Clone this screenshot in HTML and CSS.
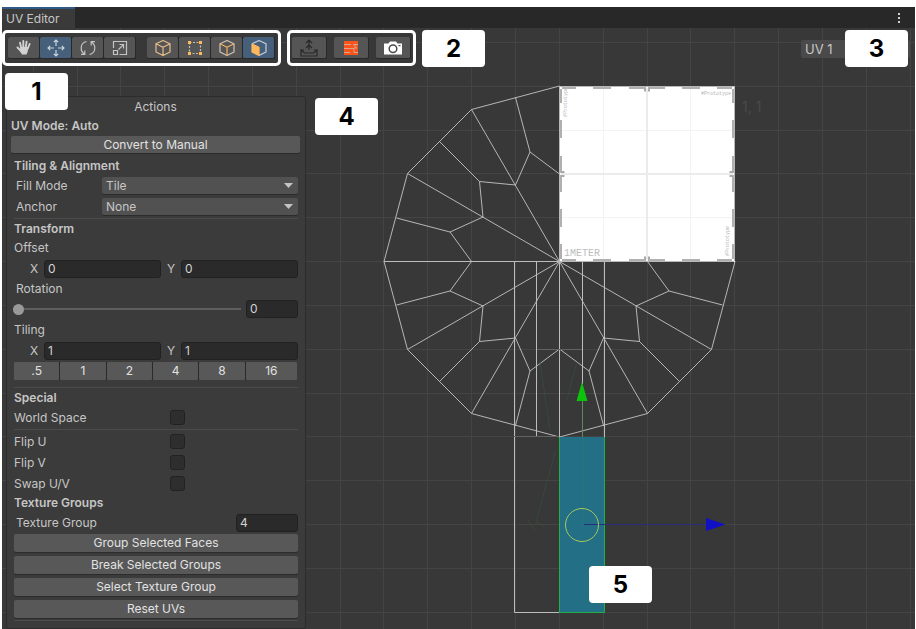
FILE: index.html
```html
<!DOCTYPE html>
<html lang="en">
<head>
<meta charset="utf-8">
<title>UV Editor</title>
<link rel="stylesheet" href="styles.css">
</head>
<body>
<div class="window">
  <header class="tabs">
    <div class="tab">UV Editor</div>
    <button class="menu" aria-label="Window menu"><svg width="4" height="12" viewBox="0 0 4 12"><path d="M1 1h2v2H1zM1 5h2v2H1zM1 9h2v2H1z" fill="#d0d0d0"/></svg></button>
  </header>
  <main class="viewport">
    <svg class="canvas" width="100%" height="100%" aria-hidden="true">
      <defs>
        <g id="quarter">
          <path d="M-175.500 0L-152-88L-88-152L0-175.500M0 0L-152-88M0 0L-88-152M-163-43.500L-109.500-29.500L-88 0M-109.500-29.500L-76.500-44.500L-80-80L-120-120M-80-80L-44-76.500L-29.500-109.500L-44-164M-29.500-109.500L0-87.500"/>
        </g>
        <g id="edge">
          <path d="M3 1.500h14M34 1.500h18M70 1.500h17M89 1.500h17M123 1.500h18M158 1.500h15" stroke="#b0b0b0" stroke-width="3"/>
          <path d="M85 4h2M89 4h2" stroke="#a9a9a9" stroke-width="3"/>
          <path d="M0 .5h175" stroke="#b9b9b9"/>
        </g>
      </defs>
      <g transform="translate(-2 -28)">
        <path d="M33.500 28V629M77.500 28V629M120.500 28V629M164.500 28V629M208.500 28V629M252.500 28V629M296.500 28V629M340.500 28V629M383.500 28V629M427.500 28V629M471.500 28V629M515.500 28V629M559.500 28V629M603.500 28V629M647.500 28V629M690.500 28V629M734.500 28V629M778.500 28V629M822.500 28V629M866.500 28V629M910.500 28V629" stroke="#444"/>
        <path d="M0 42.500H916M0 86.500H916M0 130.500H916M0 173.500H916M0 217.500H916M0 261.500H916M0 305.500H916M0 349.500H916M0 393.500H916M0 436.500H916M0 480.500H916M0 524.500H916M0 568.500H916M0 612.500H916" stroke="#444"/>
        <text x="742" y="112" class="coord">1, 1</text>
        <g fill="none" stroke="#c4c4c4" stroke-width=".9" transform="translate(559.500 261.500)">
          <use href="#quarter"/>
          <use href="#quarter" transform="scale(1 -1)"/>
          <use href="#quarter" transform="scale(-1 -1)"/>
        </g>
        <g fill="none" stroke="#bdbdbd">
          <path d="M384 261.500H735M536.500 261V437M559.500 261V437M582.500 261V384M604.500 261V437M514.500 261V612.500H559"/>
          <path d="M514 436.500H559M537 349.500H582" stroke="#626262"/>
        </g>
        <path d="M555 452L536 522L544 526M528 520L535 531M577 362L567 400M540 362L550 430" stroke="#35503c" stroke-width=".7" fill="none"/>
        <path d="M559 86H735V262H559z" fill="#fff"/>
        <path d="M603.500 88V260M690.500 88V260M561 130.500H733M561 217.500H733" stroke="#f3f3f3"/>
        <path d="M647 88V260M561 174H733" stroke="#ebebeb" stroke-width="2"/>
        <use href="#edge" transform="translate(559 86)"/>
        <use href="#edge" transform="translate(559 262) scale(1 -1)"/>
        <use href="#edge" transform="translate(559 86) rotate(90) scale(1 -1)"/>
        <use href="#edge" transform="translate(735 86) rotate(90)"/>
        <text x="564" y="256" class="meter">1METER</text>
        <text x="701" y="95" class="brand">#Prototype</text>
        <text class="brand" transform="translate(567 117) rotate(-90)">#Prototype</text>
        <text class="brand" transform="translate(729 256) rotate(-90)">#Prototype</text>
        <path d="M559 437H605V613H559z" fill="#226f86"/>
        <path d="M559.500 437V612.500H604.500V437" fill="none" stroke="#21b04a"/>
        <path d="M582.500 400V437" stroke="#5a8a5e"/>
        <path d="M582.500 437V524" stroke="#27777a"/>
        <path d="M582 382L587.500 401H576.500z" fill="#0dc40d"/>
        <path d="M584 524.500H706" stroke="#272f78"/>
        <path d="M706 518L725.500 524.500L706 531z" fill="#1010c4"/>
        <circle cx="582" cy="525" r="16.500" fill="none" stroke="#a9c75c"/>
      </g>
    </svg>

    <div class="topbar">
      <div class="tools">
        <div class="toolset">
          <button class="tool" aria-label="Pan"><svg width="18" height="18" viewBox="0 0 18 18" fill="none" stroke="#d2d2d2" stroke-linecap="round"><path d="M6.200 9L5 3.800M8.300 8V2M10.800 8L11.600 2.600M12.800 9.500L14.600 5M5.500 11.500L2.500 8.500" stroke-width="1.900"/><path d="M5.500 8H13.500L12.700 12.500L11.500 15.500H7L4.800 12z" fill="#d2d2d2" stroke="none"/></svg></button>
          <button class="tool on" aria-label="Move"><svg width="18" height="18" viewBox="0 0 18 18" fill="none" stroke="#c8d3de" stroke-width="1.200"><path d="M9 1V7M9 11V17M1 9H7M11 9H17M6.800 3.200L9 1L11.200 3.200M6.800 14.800L9 17L11.200 14.800M3.200 6.800L1 9L3.200 11.200M14.800 6.800L17 9L14.800 11.200"/></svg></button>
          <button class="tool" aria-label="Rotate"><svg width="18" height="18" viewBox="0 0 18 18" fill="none" stroke="#c4c4c4" stroke-width="1.200"><path d="M7.500 2.500C.8 4 .8 12 5.500 15M2 15.300H5.800V11.500M10.500 15.500C17.200 14 17.200 6 12.500 3M16 2.700H12.200V6.500"/></svg></button>
          <button class="tool" aria-label="Scale"><svg width="18" height="18" viewBox="0 0 18 18" fill="none" stroke="#c4c4c4" stroke-width="1.200"><path d="M2.500 9V2.500H15.500V15.500H8.500M2.500 11.500H6.500V15.500H2.500zM7.500 10.500L12.200 5.800M8.500 5.500H12.500V9.500"/></svg></button>
        </div>
        <div class="toolset">
          <button class="tool" aria-label="Object selection"><svg width="18" height="18" viewBox="0 0 18 18" fill="none" stroke="#e6bd8a" stroke-width="1.200" stroke-linejoin="round"><path d="M9 1.500L16 4.800V13L9 16.500L2 13V4.800zM2 4.800L9 8.200L16 4.800M9 8.200V16.500"/></svg></button>
          <button class="tool" aria-label="Vertex selection"><svg width="18" height="18" viewBox="0 0 18 18"><path d="M3.500 3.500H14.500V14.500H3.500z" fill="none" stroke="#c8c0b6" stroke-width="1.200" stroke-dasharray="2 1.500"/><path d="M2 2h3v3H2zM13 2h3v3h-3zM2 13h3v3H2zM13 13h3v3h-3z" fill="#ffb85c"/></svg></button>
          <button class="tool" aria-label="Edge selection"><svg width="18" height="18" viewBox="0 0 18 18" fill="none" stroke="#d0c5b7" stroke-width="1.200" stroke-linejoin="round"><path d="M9 1.500L16 4.800V13L9 16.500L2 13V4.800z"/><path d="M2 4.800L9 8.200L16 4.800M9 8.200V16.500" stroke="#f0b264"/></svg></button>
          <button class="tool on" aria-label="Face selection"><svg width="18" height="18" viewBox="0 0 18 18" fill="none" stroke="#c4d0dc" stroke-width="1.200" stroke-linejoin="round"><path d="M2 4.800L9 1.500L16 4.800V13L9 16.500"/><path d="M2 5L9 8.400V16.500L2 13z" fill="#ffb75c" stroke="#ffb75c"/></svg></button>
        </div>
      </div>
      <div class="tools view">
        <button class="tool" aria-label="Move in scene"><svg width="20" height="20" viewBox="0 0 20 20" fill="none" stroke="#292929" stroke-width="1.200"><path d="M10 12V2M7 5L10 2L13 5M7 10L10 7L13 10M2 12V18H18V12L14.500 15H5.500zM2 12H5M18 12H15"/></svg></button>
        <button class="tool" aria-label="Texture preview"><svg width="18" height="18" viewBox="0 0 18 18"><path d="M2 2H16V16H2z" fill="#fa541c"/><path d="M2 5.500H9M11 5.500H16M2 9.500H12M2 13.500H8M12 9V13.500H16M13 5.500V9H15" fill="none" stroke="#d9a58c" stroke-width="1"/></svg></button>
        <button class="tool" aria-label="Save UV image"><svg width="20" height="18" viewBox="0 0 20 18"><path d="M1 4.500H5.500L7 2.500H13L14.500 4.500H19V15.500H1z" fill="#fff"/><circle cx="10" cy="9.800" r="3.800" fill="#fff" stroke="#4b4b4b" stroke-width="1.500"/><path d="M15.500 6h2v1.200h-2z" fill="#4b4b4b"/></svg></button>
      </div>
      <span class="callout">2</span>
      <div class="channel">
        <select aria-label="UV channel"><option>UV 1</option></select>
        <span class="callout third">3</span>
      </div>
    </div>

    <section class="actions">
      <span class="callout first">1</span>
      <span class="callout fourth">4</span>
      <h1>Actions</h1>
      <h2 class="mode">UV Mode: Auto</h2>
      <button class="wide convert">Convert to Manual</button>
      <div class="fields">
        <h2>Tiling &amp; Alignment</h2>
        <div class="row"><label class="inset name" for="fill">Fill Mode</label><select id="fill"><option>Tile</option></select></div>
        <div class="row"><label class="inset name" for="anchor">Anchor</label><select id="anchor"><option>None</option></select></div>
        <hr>
        <h2>Transform</h2>
        <div class="row tight">Offset</div>
        <div class="row pair"><label for="ox">X</label><input id="ox" type="text" value="0"><label for="oy">Y</label><input id="oy" type="text" value="0"></div>
        <div class="row tight"><label class="inset" for="rot">Rotation</label></div>
        <div class="row tight spin"><input id="rot" type="range" min="0" max="360" value="0"><input type="text" value="0" aria-label="Rotation value"></div>
        <div class="row">Tiling</div>
        <div class="row pair"><label for="tx">X</label><input id="tx" type="text" value="1"><label for="ty">Y</label><input id="ty" type="text" value="1"></div>
        <div class="presets"><button>.5</button><button>1</button><button>2</button><button>4</button><button>8</button><button>16</button></div>
        <hr class="after">
        <h2>Special</h2>
        <div class="row"><label class="flag" for="world">World Space</label><input id="world" type="checkbox"></div>
        <hr>
        <div class="row"><label class="flag" for="fu">Flip U</label><input id="fu" type="checkbox"></div>
        <div class="row"><label class="flag" for="fv">Flip V</label><input id="fv" type="checkbox"></div>
        <div class="row"><label class="flag" for="swap">Swap U/V</label><input id="swap" type="checkbox"></div>
        <h2>Texture Groups</h2>
        <div class="row group"><label class="inset" for="tg">Texture Group</label><input id="tg" type="text" value="4"></div>
        <div class="stack">
          <button class="wide">Group Selected Faces</button>
          <button class="wide">Break Selected Groups</button>
          <button class="wide">Select Texture Group</button>
          <button class="wide">Reset UVs</button>
        </div>
        <hr>
      </div>
    </section>
    <span class="callout fifth">5</span>
  </main>
</div>
</body>
</html>
```
FILE: styles.css
```css
* { box-sizing: border-box; }

body {
  margin: 0;
  background: #fff;
  color: #c6c6c6;
  font: 12px/18px Inter, "Liberation Sans", sans-serif;
}

button, input, select {
  margin: 0;
  padding: 0;
  border: 0;
  font: inherit;
  color: inherit;
}

.window {
  display: flex;
  flex-direction: column;
  min-height: 100vh;
  padding: 7px 1px 0 2px;
}

.tabs {
  display: flex;
  justify-content: space-between;
  height: 21px;
  background: #282828;
}

.tab {
  padding: 1px 15px 0 4px;
  border-top: 2px solid #2f5a83;
  background: #3a3a3a;
}

.menu {
  display: flex;
  align-items: center;
  justify-content: center;
  width: 32px;
  background: none;
}

.viewport {
  position: relative;
  flex: 1;
  background: #383838;
  overflow: hidden;
}

.canvas {
  position: absolute;
  inset: 0;
}

.coord { font-size: 14px; fill: #4a4a4a; }
.meter { font: 10px "Liberation Mono", monospace; fill: #bdbdbd; }
.brand { font: 5px "Liberation Mono", monospace; fill: #b5b5b5; }

.callout {
  display: grid;
  place-items: center;
  width: 63px;
  height: 37px;
  border-radius: 4px;
  background: #fff;
  color: #000;
  font-size: 24px;
  font-weight: 700;
}

.topbar {
  position: relative;
  display: flex;
  align-items: flex-start;
  gap: 6px;
  padding-top: 2px;
}

.tools {
  display: flex;
  align-items: center;
  gap: 11px;
  height: 36px;
  padding: 0 3px;
  border: 3px solid #fff;
  border-radius: 5px;
  background: #383838;
}

.view { gap: 7px; padding: 0 2px; }

.toolset {
  display: flex;
  background: #292929;
}

.tool {
  display: grid;
  place-items: center;
  width: 32px;
  height: 22px;
  border: solid #292929;
  border-width: 0 1px 1px 0;
  border-radius: 2px;
  background: #555;
}

.view .tool { width: 35px; }
.tool.on { background: #46607c; }

.channel {
  position: relative;
  width: 109px;
  margin: 10px 5px 0 auto;
}

.channel .third {
  position: absolute;
  right: 2px;
  top: -10px;
}

select {
  flex: 1;
  min-width: 0;
  height: 17px;
  padding-left: 4px;
  border-radius: 2px;
  appearance: none;
  background: #515151;
  line-height: 17px;
}

.channel select {
  width: 100%;
  height: 18px;
  background: #4a4a4a;
  font-size: 13px;
}

.actions {
  position: relative;
  width: 300px;
  margin: 29px 0 0 4px;
  padding: 0 5px 6px 4px;
  border: 1px solid #2c2c2c;
  border-radius: 2px;
  background: #3b3b3b;
}

.first { position: absolute; left: -2px; top: -24px; }
.fourth { position: absolute; left: 308px; top: 1px; }
.fifth { position: absolute; left: 587px; top: 538px; }

h1, h2 { margin: 0; font-size: 12px; height: 18px; }
h1 { height: 20px; line-height: 20px; font-weight: 400; text-align: center; }
h2 { font-weight: 600; }

.wide {
  display: block;
  width: 100%;
  height: 18px;
  border-radius: 2px;
  background: #585858;
  color: #e2e2e2;
  line-height: 18px;
  box-shadow: 0 1px #2b2b2b;
}

.convert { height: 17px; margin: 1px 0 4px; line-height: 17px; }

.fields { padding: 0 2px 0 3px; }

.row {
  display: flex;
  align-items: center;
  height: 21px;
}

.tight { height: 20px; }
.inset { padding-left: 2px; }
.name { width: 88px; }

.row select {
  background: url("data:image/svg+xml,%3Csvg xmlns='http://www.w3.org/2000/svg' width='9' height='5'%3E%3Cpath d='M0 0h9L4.500 5z' fill='%23c4c4c4'/%3E%3C/svg%3E") no-repeat right 5px center, #515151;
  box-shadow: 0 1px #2c2c2c;
}

input[type="text"] {
  flex: 1;
  min-width: 0;
  height: 18px;
  padding-left: 3px;
  border: 1px solid #212121;
  border-radius: 3px;
  background: #2a2a2a;
  color: #d2d2d2;
}

.pair label { width: 14px; margin-left: 16px; }
.pair input + label { margin-left: 6px; }

.spin { gap: 5px; }
.spin input[type="text"] { flex: 0 0 52px; }
.group { justify-content: space-between; }
.group input[type="text"] { flex: 0 0 62px; }

input[type="range"] {
  flex: 1;
  min-width: 0;
  height: 11px;
  margin-left: -1px;
  appearance: none;
  background: linear-gradient(#5e5e5e, #5e5e5e) no-repeat center / 100% 2px;
}

input[type="range"]::-webkit-slider-thumb {
  appearance: none;
  width: 11px;
  height: 11px;
  border-radius: 50%;
  background: #999;
}

.presets {
  display: flex;
  gap: 1px;
  margin: 1px 1px 0 0;
  background: #2a2a2a;
}

.presets button {
  flex: 1 1 45px;
  height: 18px;
  border-radius: 1px;
  background: #585858;
  color: #e2e2e2;
  line-height: 18px;
}

.presets button:last-child { flex-basis: 51px; }

hr {
  height: 1px;
  margin: 1px 0;
  border: 0;
  background: #4b4b4b;
}

hr.after { margin-top: 7px; }

.flag { width: 156px; }

input[type="checkbox"] {
  width: 15px;
  height: 15px;
  appearance: none;
  border: 1px solid #222;
  border-radius: 3px;
  background: #2e2e2e;
}

.stack {
  display: grid;
  gap: 4px;
  margin: 1px 0 2px;
}
```
